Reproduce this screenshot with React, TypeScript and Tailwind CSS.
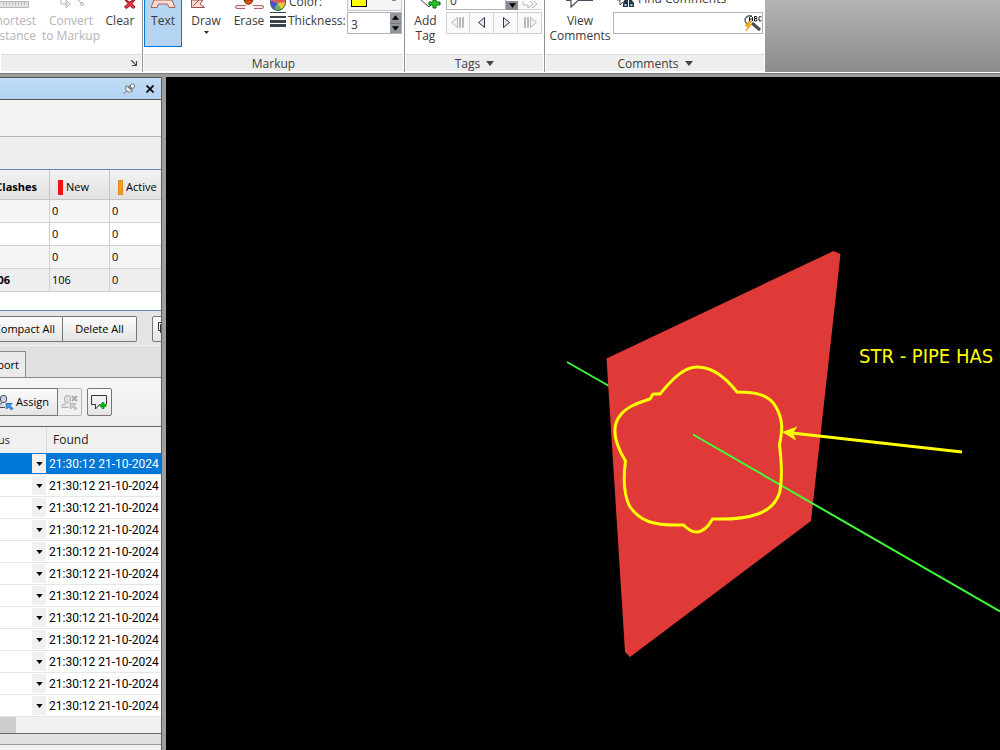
import type { ReactNode } from "react";

const rows = Array.from({ length: 12 }, (_, i) => ({ id: i, found: "21:30:12 21-10-2024" }));

const tests = [
  { clashes: "", fresh: "0", active: "0", tone: "bg-[#f5f5f5]" },
  { clashes: "", fresh: "0", active: "0", tone: "bg-white" },
  { clashes: "", fresh: "0", active: "0", tone: "bg-[#f5f5f5]" },
  { clashes: "106", fresh: "106", active: "0", tone: "bg-[#eeeeee]" },
];

function Caret({ className = "" }: { className?: string }) {
  return (
    <svg width="8" height="5" viewBox="0 0 8 5" className={className} aria-hidden="true">
      <path d="M0 0h8L4 5z" fill="currentColor" />
    </svg>
  );
}

function Group({ title, caret, launcher, className, children }: {
  title?: string; caret?: boolean; launcher?: boolean; className: string; children: ReactNode;
}) {
  return (
    <section className={`flex shrink-0 flex-col border-r border-[#929292] last:border-r-0 ${className}`}>
      <div className="flex h-[54px] items-end overflow-hidden">{children}</div>
      <div className="mx-px flex h-[17px] items-center justify-center gap-[6px] border-t border-[#dcdcdc] bg-[#eeeeee] text-[#404040]">
        {title}
        {caret && <Caret className="text-[#444]" />}
        {launcher && (
          <button aria-label="Open measure options" className="ml-auto mr-1">
            <svg width="6" height="6" viewBox="0 0 6 6" aria-hidden="true">
              <path d="M0 0l5 5M5.500 1v4.500H1" fill="none" stroke="#444" strokeWidth="1.200" />
            </svg>
          </button>
        )}
      </div>
    </section>
  );
}

function StepButton({ label, points, disabled, bar }: {
  label: string; points: string; disabled?: boolean; bar?: string;
}) {
  return (
    <button aria-label={label} disabled={disabled} className="flex h-[22px] w-6 items-center justify-center border border-l-0 border-[#cfcfd2] bg-[#fafafa] first:border-l">
      <svg width="14" height="12" viewBox="0 0 14 12" aria-hidden="true" fill={disabled ? "#f1f1f1" : "#dfe4f2"} stroke={disabled ? "#b9b9b9" : "#2f3742"}>
        <polygon points={points} />
        {bar && <path d={bar} />}
      </svg>
    </button>
  );
}

const bigButton = "relative flex shrink-0 flex-col items-center justify-start pt-[13px] text-center";

function Ribbon() {
  return (
    <header className="flex h-[72px] shrink-0 bg-linear-to-b from-[#b4b4b4] to-[#8c8c8c] text-[12px] leading-[15px] text-[#3a3a3a]">
      <div className="flex bg-white">
        <Group className="w-[143px]" launcher>
          <div className="flex h-[54px] w-full">
            <button disabled className={`${bigButton} w-9 text-[#b4b4b4]`}>
              <svg className="absolute left-0 top-0" width="29" height="9" viewBox="0 0 29 9" aria-hidden="true">
                <path d="M0 1.500h28.500v6H0" fill="#e2e2e2" stroke="#b9b9b9" />
                <path d="M3.500 2v3M6.500 2v3M9.500 2v3M12.500 2v3M15.500 2v3M18.500 2v3M21.500 2v3M24.500 2v3" stroke="#bdbdbd" />
              </svg>
              <span className="flex w-full flex-col items-end"><span>Shortest</span><span>Distance</span></span>
            </button>
            <button disabled className={`${bigButton} w-[70px] text-[#b4b4b4]`}>
              <svg className="absolute left-6 top-0" width="26" height="9" viewBox="0 0 26 9" aria-hidden="true" fill="none" stroke="#b0b0b0">
                <path d="M1 0v4h7M6 0.500l4.500 3.500L6 7.500z" />
                <path d="M18 0l3 3" /><circle cx="22" cy="4" r="1.500" />
              </svg>
              <span>Convert</span><span>to Markup</span>
            </button>
            <button className={`${bigButton} w-7`}>
              <svg className="absolute left-[18px] top-0" width="12" height="9" viewBox="0 0 12 9" aria-hidden="true">
                <path d="M2 0l3.500 2L9 0h2L8 3.500 11 7l-2 1.500-3-3-3.500 3L0.500 7 4 3.500 1 0z" fill="#f0323a" stroke="#8c1016" />
              </svg>
              Clear
            </button>
          </div>
        </Group>

        <Group title="Markup" className="w-[262px]">
          <div className="flex h-[54px] pl-px">
            <button aria-pressed="true" className={`${bigButton} h-[47px] w-[38px] border border-t-0 border-[#0078d7] bg-[#b5d4f2]`}>
              <svg className="absolute left-1 top-0" width="28" height="9" viewBox="0 0 28 9" aria-hidden="true">
                <path d="M5 0L2 7.500h6L9.500 4h9L20 7.500h6L23 0z" fill="#fbdcd2" stroke="#a5625f" />
              </svg>
              Text
            </button>
            <button className={`${bigButton} h-[47px] w-12`}>
              <svg className="absolute left-[9px] top-0" width="17" height="9" viewBox="0 0 17 9" aria-hidden="true">
                <path d="M0.500 0v7.500h13L9 4l3-4z" fill="#fbdcd2" stroke="#9b504c" />
                <path d="M2 6l6-6" stroke="#9b504c" />
              </svg>
              Draw
              <svg className="mt-[3px]" width="5" height="3" viewBox="0 0 5 3" aria-hidden="true"><path d="M0 0h5L2.500 3z" fill="#333" /></svg>
            </button>
            <button className={`${bigButton} h-[47px] w-[38px]`}>
              <svg className="absolute left-[3px] top-0" width="32" height="10" viewBox="0 0 32 10" aria-hidden="true">
                <rect x="2.500" y="5.500" width="28" height="3" rx="1.500" fill="#fbe7e3" stroke="#b4625e" />
                <path d="M12 6q4-3 9 0v3h-9z" fill="#fff" />
                <path d="M11 0h9q-1 4-4.500 4.500Q12 4 11 0z" fill="#e65612" stroke="#752b0c" />
              </svg>
              Erase
            </button>
            <div className="flex h-[34px] flex-col justify-end pl-[2px]">
              <div className="flex h-[11px] items-end">
                <svg width="16" height="11" viewBox="0 0 16 11" aria-hidden="true" className="shrink-0">
                  <path d="M8 3L0 0Q0 8 4 10z" fill="#4b55cb" /><path d="M8 3L4 10Q8 12 12 10z" fill="#61b84b" />
                  <path d="M8 3l4 7Q16 7 16 1z" fill="#f2c32e" /><path d="M0 0h16v2L8 3z" fill="#df594e" />
                  <path d="M0.500 0Q0 6 4 9q4 3 8 0 4-3 3.500-9" fill="none" stroke="#555a6c" />
                </svg>
                <label htmlFor="color" className="mb-[2px] w-[61px] pl-[3px]">Color:</label>
                <button id="color" className="flex h-[11px] w-[55px] items-start justify-between border border-t-0 border-[#c4c7ce] bg-[#f5f5f5] pl-[3px] pr-[5px]">
                  <span className="h-[7px] w-[16px] border border-t-0 border-black bg-[#ffff00]" />
                  <span className="h-px w-1 bg-[#888]" />
                </button>
              </div>
              <div className="flex h-[23px] items-end">
                <svg width="16" height="17" viewBox="0 0 16 17" aria-hidden="true" className="mb-[6px] shrink-0"><path d="M0 1h16v1H0zM0 5h16v2H0zM0 9h16v3H0zM0 13h16v3H0z" fill="#3d434c" /></svg>
                <label htmlFor="thickness" className="mb-[6px] w-[61px] whitespace-nowrap pl-[2px]">Thickness:</label>
                <span className="flex h-[22px] w-[55px] border border-[#adb2bc] bg-white">
                  <input id="thickness" defaultValue="3" className="w-[42px] pl-[3px] pt-[3px] outline-none" />
                  <span className="flex w-[11px] flex-col gap-px bg-[#777]">
                    <button aria-label="Increase thickness" className="flex flex-1 items-center justify-center bg-[#92969c] text-black"><Caret className="w-[7px] rotate-180" /></button>
                    <button aria-label="Decrease thickness" className="flex flex-1 items-center justify-center bg-[#92969c] text-black"><Caret className="w-[7px]" /></button>
                  </span>
                </span>
              </div>
            </div>
          </div>
        </Group>

        <Group title="Tags" caret className="w-[140px]">
          <div className="flex h-[54px]">
            <button className={`${bigButton} w-[41px]`}>
              <svg className="absolute left-4 top-0" width="20" height="9" viewBox="0 0 20 9" aria-hidden="true">
                <path d="M0 0l8 7 5-5V0" fill="#fff" stroke="#444b57" />
                <path d="M12 0h3v2h4v3h-4v3h-3V5H8V2h4z" fill="#25c72b" stroke="#08730f" />
              </svg>
              <span>Add</span><span>Tag</span>
            </button>
            <div>
              <div className="flex h-[10px] items-end">
                <input aria-label="Tag number" defaultValue="0" className="h-[19px] w-[60px] border border-[#adb2bc] pl-[3px] outline-none" />
                <button aria-label="Tag list" className="flex h-[9px] w-3 items-center justify-center bg-[#888b91] text-black"><Caret className="w-[7px]" /></button>
                <button aria-label="Go to tag" disabled className="flex h-[9px] w-6 items-start justify-center border-b border-[#d4d4d4] bg-[#fafafa]">
                  <svg width="16" height="8" viewBox="0 0 16 8" fill="none" stroke="#b9b9b9" aria-hidden="true"><path d="M1 0v4h5v3l5-4-3-3M10 7l5-4-3-3" /></svg>
                </button>
              </div>
              <div className="mt-[2px] flex">
                <StepButton label="First tag" disabled points="6.5,0.5 6.5,10.5 0.5,5.5" bar="M8.500 0.500h1v10h-1zM11.500 0.500h1v10h-1z" />
                <StepButton label="Previous tag" points="9.5,0.5 9.5,10.5 3.5,5.5" />
                <StepButton label="Next tag" points="4.5,0.5 4.5,10.5 10.5,5.5" />
                <StepButton label="Last tag" disabled points="7.5,0.5 7.5,10.5 13.5,5.5" bar="M1.500 0.500h1v10h-1zM4.500 0.500h1v10h-1z" />
              </div>
            </div>
          </div>
        </Group>

        <Group title="Comments" caret className="w-[220px]">
          <div className="flex h-[54px] pl-1">
            <button className={`${bigButton} w-[62px]`}>
              <svg className="absolute left-[17px] top-0" width="28" height="8" viewBox="0 0 28 8" aria-hidden="true">
                <path d="M0 0.500h5V7l7-6.500h15" fill="none" stroke="#48505b" strokeWidth="1.200" />
              </svg>
              <span>View</span><span>Comments</span>
            </button>
            <div className="pl-[2px]">
              <button className="flex h-[10px] items-end gap-1 pl-1 text-left">
                <svg width="17" height="10" viewBox="0 0 17 10" aria-hidden="true" className="mb-[2px]">
                  <path d="M0 2h3v5l3-3" fill="none" stroke="#48505b" />
                  <path d="M8 1h3v8H6V5zM12 1h2l3 4v4h-5z" fill="#24344d" /><path d="M7.500 6h2v2h-2zM13.500 6h2v2h-2z" fill="#a8cdf3" />
                </svg>
                <span className="mb-1">Find Comments</span>
              </button>
              <div className="mt-[2px] flex h-[22px] w-[150px] items-center border border-[#b4b6be] bg-white">
                <input aria-label="Find comments text" className="w-[130px] outline-none" />
                <button aria-label="Quick find">
                  <svg width="18" height="18" viewBox="0 0 18 18" aria-hidden="true">
                    <path d="M8 2Q2 1 1 6q0 2 2 4" fill="none" stroke="#606a6c" strokeWidth="1.500" />
                    <path d="M8 9l8 7" stroke="#474b50" strokeWidth="3" />
                    <path d="M5 7L1 12h3l-2 5 6-7H5l3-3z" fill="#ffad16" stroke="#cc7800" strokeWidth=".5" />
                    <path d="M5.500 7V3.500l1-1h1l1 1V7M5.500 5h3M10.500 7V2.500h2l.5 1-.5 1h-2M12.500 4.500l.5 1-.5 1.500h-2M17.500 3l-1-.5h-1l-.5 1v2.500l.5 1h1l1-.5" fill="none" stroke="#111" />
                  </svg>
                </button>
              </div>
            </div>
          </div>
        </Group>
      </div>
    </header>
  );
}

const toolButton = "flex items-center border border-[#777] bg-linear-to-b from-[#fcfcfc] to-[#e4e4e4]";

function PersonIcon({ disabled }: { disabled?: boolean }) {
  return (
    <svg width="17" height="17" viewBox="0 0 17 17" aria-hidden="true" className="shrink-0">
      <rect x="3.500" y="1.500" width="6" height="7" rx="2.500" fill={disabled ? "#ddd" : "#cbd2de"} stroke={disabled ? "#b5b5b5" : "#4a5362"} />
      <path d="M5 9L1 11v2.500h7" fill={disabled ? "#ddd" : "#cbd2de"} stroke={disabled ? "#b5b5b5" : "#4a5362"} />
      <path d="M9 9.500h6l-2 2 3 3-1.500 1.500-3-3L9.500 15z" fill={disabled ? "#ccc" : "#369af0"} stroke={disabled ? "#aaa" : "#0b5eaf"} strokeWidth=".8" />
      {disabled && <path d="M11 2l5 5M16 2l-5 5" stroke="#aaa" strokeWidth="2" />}
    </svg>
  );
}

function ClashPanel() {
  return (
    <aside className="flex w-[162px] shrink-0 flex-col overflow-hidden border-r border-[#5d5d5d] bg-[#f2f2f2] text-[11px] leading-[14px] text-black">
      <div className="flex h-[23px] shrink-0 items-center justify-end gap-[10px] border-y border-[#555] bg-linear-to-b from-[#c0dcf5] to-[#b2d3f2] pr-[7px]">
        <button aria-label="Auto hide">
          <svg width="13" height="12" viewBox="0 0 13 12" aria-hidden="true">
            <path d="M0.500 11L4 7.500" stroke="#777" />
            <path d="M3 2.500Q1.500 6 4 8.500q3 1.500 5.500-.5z" fill="#eee" stroke="#777" />
            <path d="M5 4l3-2 2.500 2.500-2 2.500z" fill="#888" stroke="#777" />
            <circle cx="9.500" cy="3" r="2.200" fill="#f5f5f5" stroke="#777" />
          </svg>
        </button>
        <button aria-label="Close panel">
          <svg width="8" height="8" viewBox="0 0 8 8" aria-hidden="true"><path d="M.5 .5l7 7M7.500 .5l-7 7" stroke="#000" strokeWidth="1.700" /></svg>
        </button>
      </div>
      <div className="h-[37px] shrink-0 border-b border-[#b5b5b5]" />
      <div className="h-8 shrink-0 bg-[#efefef]" />
      <div className="h-[142px] shrink-0 border-y border-[#5b8abb] bg-white">
        <table className="w-full table-fixed border-separate border-spacing-0 text-left">
          <thead>
            <tr className="h-[30px] bg-linear-to-b from-[#f2f2f2] to-[#e1e1e1]">
              <th className="w-[50px] border-b border-r border-[#c4c4c4] p-0 pt-[5px] font-bold"><span className="float-right mr-[12px]">Clashes</span></th>
              <th className="w-[60px] border-b border-r border-[#c4c4c4] p-0 pl-2 pt-[5px] font-normal"><span className="flex items-center gap-[3px]"><i className="h-[15px] w-[5px] bg-[#f50f0f]" />New</span></th>
              <th className="border-b border-[#c4c4c4] p-0 pl-2 pt-[5px] font-normal"><span className="flex items-center gap-[3px]"><i className="h-[15px] w-[5px] border border-[#d78b22] bg-[#fb9d09]" />Active</span></th>
            </tr>
          </thead>
          <tbody>
            {tests.map((t, i) => (
              <tr key={i} className={`h-[23px] ${t.tone}`}>
                <td className="border-b border-r border-[#d0d0d0] p-0 font-bold"><span className="float-right mr-[39px]">{t.clashes}</span></td>
                <td className="border-b border-r border-[#d0d0d0] p-0 pl-[2px]">{t.fresh}</td>
                <td className="border-b border-[#d0d0d0] p-0 pl-[2px]">{t.active}</td>
              </tr>
            ))}
          </tbody>
        </table>
      </div>
      <div className="flex h-[35px] shrink-0 items-start border-b border-[#f3f3f3] bg-[#e4e4e4] pt-[5px]">
        <button className={`${toolButton} h-[26px] w-[63px] shrink-0 justify-end whitespace-nowrap border-l-0 pr-[7px]`}>Compact All</button>
        <button className={`${toolButton} h-[26px] w-[74px] shrink-0 justify-center rounded-r-[2px] border-l-0`}>Delete All</button>
        <button aria-label="Copy" className={`${toolButton} ml-[15px] h-[26px] w-6 shrink-0 rounded-[2px] pl-[5px]`}>
          <svg width="14" height="14" viewBox="0 0 14 14" className="shrink-0" aria-hidden="true"><path d="M.5.5h9v8h-9zM2.500 2.500h9v8h-9z" fill="#eee" stroke="#333" /></svg>
        </button>
      </div>
      <div className="flex h-8 shrink-0 items-end border-b border-[#8a8a8a] bg-[#e1e1e1]">
        <button className="flex h-[26px] w-[26px] items-center justify-end border border-b-0 border-l-0 border-[#8a8a8a] bg-[#eaeaea] pr-[6px] pt-px">Report</button>
      </div>
      <div className="flex h-[48px] shrink-0 items-start bg-linear-to-b from-[#f6f6f6] to-[#ededed] pt-[10px]">
        <button className={`${toolButton} h-[28px] w-[58px] shrink-0 justify-end gap-[2px] border-l-0 pr-2`}><PersonIcon />Assign</button>
        <button aria-label="Unassign" disabled className="flex h-[28px] w-6 items-center justify-center rounded-r-[2px] border border-l-0 border-[#b5b5b5] bg-[#f0f0f0]"><PersonIcon disabled /></button>
        <button aria-label="Add comment" className={`${toolButton} ml-[5px] h-[28px] w-[25px] justify-center rounded-[2px]`}>
          <svg width="17" height="17" viewBox="0 0 17 17" aria-hidden="true">
            <path d="M.5 1.500h15v9h-7L4.500 15v-4.500h-4z" fill="#eef0f5" stroke="#333" />
            <path d="M11 8.500h2v2h2v2h-2v2h-2v-2H9v-2h2z" fill="#0daa18" stroke="#0daa18" />
          </svg>
        </button>
      </div>
      <div className="shrink-0 border-t border-[#666]">
        <table className="w-full table-fixed border-separate border-spacing-0 text-left">
          <thead>
            <tr className="h-[26px] bg-[#f0f0f0] text-[#222]">
              <th className="w-[47px] border-r border-[#dadada] p-0 font-normal"><span className="float-right mr-[36px]">Status</span></th>
              <th className="p-0 pl-[6px] text-[12px] font-normal">Found</th>
            </tr>
          </thead>
          <tbody className="bg-white font-[Roboto,sans-serif] text-[12px]">
            {rows.map((r) => (
              <tr key={r.id} className={r.id === 0 ? "h-[22px] bg-[#0078d7] text-white" : "h-[22px]"}>
                <td className="border-b border-[#e6e6e6] p-0 pr-px">
                  <button aria-label="Change status" className="float-right flex h-[19px] w-[14px] items-center justify-center bg-[#f0f0f0] text-black"><Caret className="h-1 w-[7px]" /></button>
                </td>
                <td className="whitespace-nowrap border-b border-[#e6e6e6] p-0 pl-[2px]">{r.found}</td>
              </tr>
            ))}
          </tbody>
        </table>
      </div>
      <div className="h-[17px] shrink-0 border-b border-[#666] bg-[#f0f0f0]"><div className="h-full w-4 bg-[#cdcdcd]" /></div>
      <div className="h-[11px] shrink-0 border-b border-[#999] bg-[#e1e1e1]" />
      <div className="flex-1 bg-[#f2f2f2]" />
    </aside>
  );
}

function Scene() {
  return (
    <main className="min-w-0 flex-1 overflow-hidden bg-black">
      <svg width="834" height="673" viewBox="166 77 834 673" role="img" aria-label="Clash view" className="block">
        <path d="M567 362l42 24" stroke="#3dff37" strokeWidth="1.700" />
        <path d="M606.500 358.500L833.500 251l7 3L811 521 630 657l-5-5z" fill="#e03a38" />
        <path d="M693 434.500L1000 611.500" stroke="#3dff37" strokeWidth="2" />
        <path d="M650 399c2-1 1-5 4-5h6C674 377 685 367 697 367s26 7 40 25c22 0 33 4 39 15 8 14 6 25 3.500 38 2 16 3 34 0 48-7 21-30 27-67 26-5 9-10 13-16 13-5 0-9-3-13-7-31 1-44-4-54-19-6-12-6-30-4-45-11-18-15-34-5-46 6-8 17-12 29.500-16z" fill="none" stroke="#ffff00" strokeWidth="3" strokeLinejoin="round" />
        <path d="M792 433L962 452" stroke="#ffff00" strokeWidth="3" />
        <path d="M782 432l15.500-5.500-4.500 6.500 3 7.500z" fill="#ffff00" />
        <text x="859" y="363" fill="#ffff00" fontSize="20" className="font-['DejaVu_Sans_Condensed','DejaVu_Sans',sans-serif]">STR - PIPE HAS C</text>
      </svg>
    </main>
  );
}

export default function App() {
  return (
    <div className="flex h-screen flex-col overflow-hidden bg-[#9d9d99] font-['Open_Sans','Noto_Sans',sans-serif]">
      <Ribbon />
      <div className="h-[5px] shrink-0 border-t border-white"><div className="h-px bg-[#777]" /></div>
      <div className="flex min-h-0 flex-1 gap-1">
        <ClashPanel />
        <Scene />
      </div>
    </div>
  );
}
